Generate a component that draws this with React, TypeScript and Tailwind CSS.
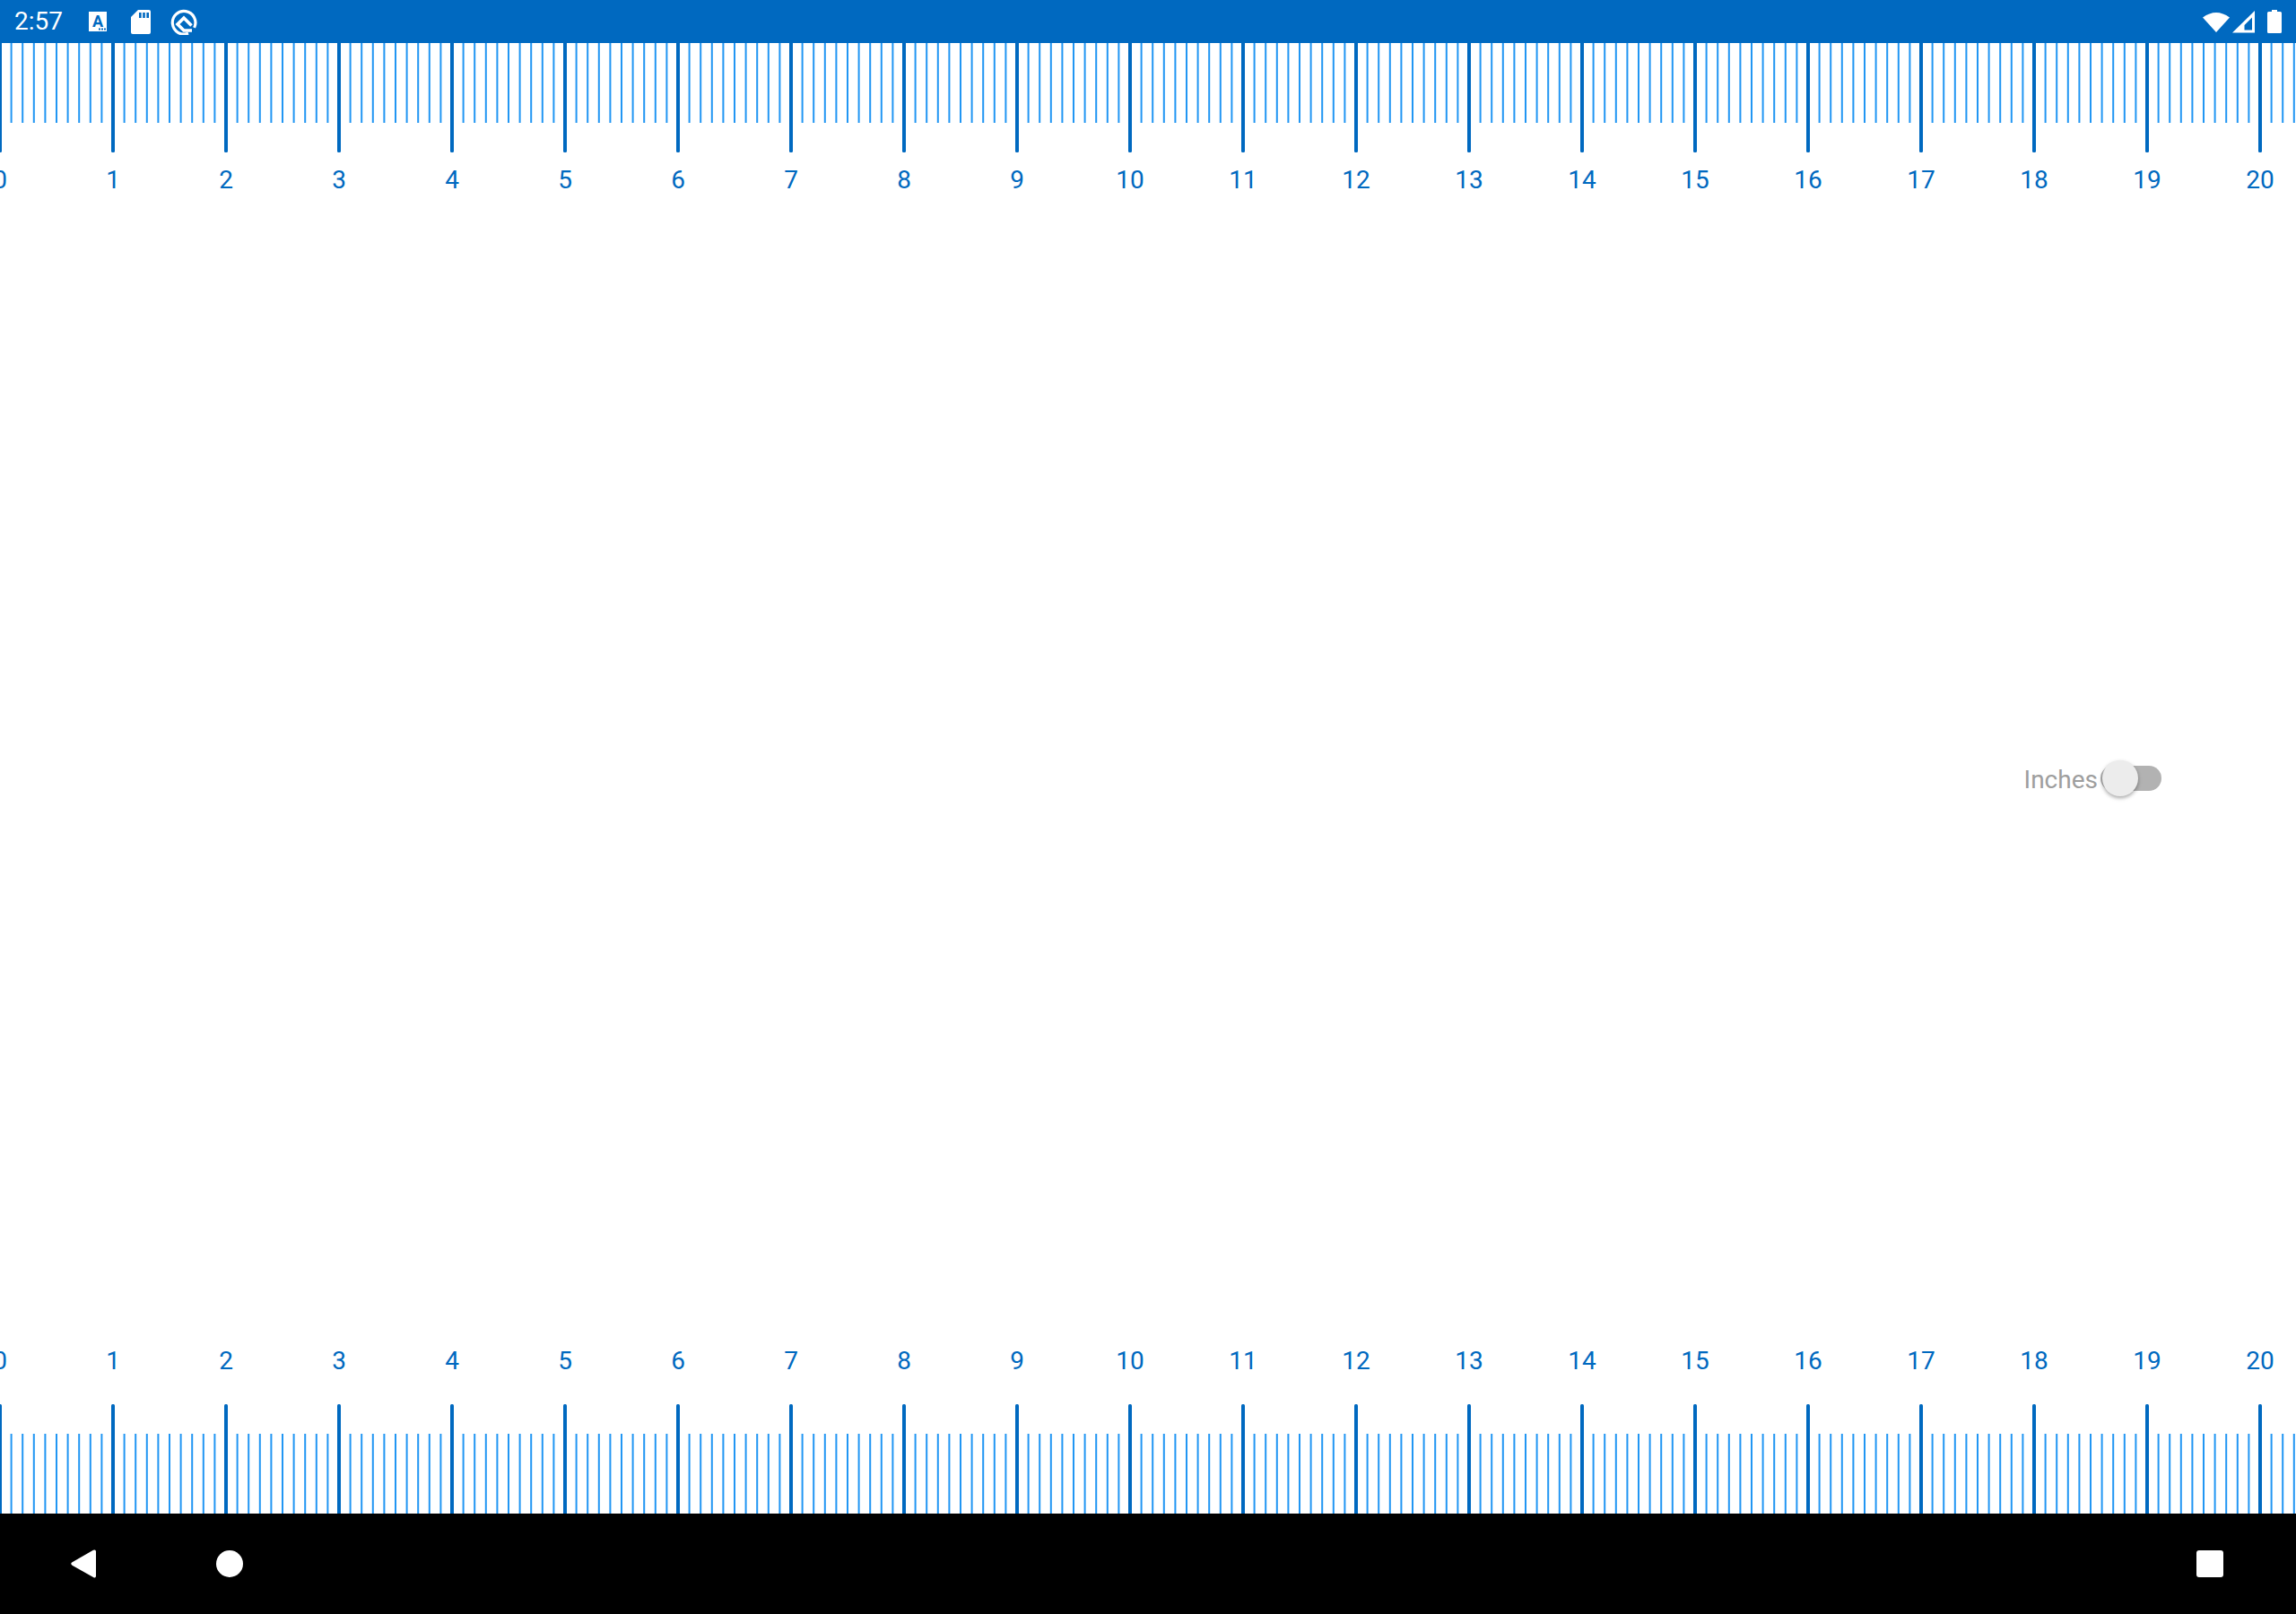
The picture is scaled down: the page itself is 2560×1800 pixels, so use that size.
const MAJOR = "#0069c0";
const MINOR = "#2196f3";
const inches = Array.from({ length: 21 }, (_, i) => i);
const ticks = Array.from({ length: 204 }, (_, i) => i);

function Ticks({ flip }: { flip?: boolean }) {
  return (
    <svg width="2560" height="122" viewBox="0 0 2560 122" className="block shrink-0">
      <g transform={flip ? "translate(0 122) scale(1 -1)" : undefined}>
        {ticks.map((i) =>
          i % 10 === 0 ? (
            <rect key={i} x={i * 12.6 - 2} y={-4} width={4} height={126} rx={1.5} fill={MAJOR} />
          ) : (
            <rect key={i} x={i * 12.6 - 1} y={0} width={2} height={89} fill={MINOR} />
          ),
        )}
      </g>
    </svg>
  );
}

function Labels() {
  return (
    <div className="flex ml-[-63px] h-8 text-[28px] leading-8 text-[#0069c0]">
      {inches.map((i) => (
        <div key={i} className="w-[126px] shrink-0 text-center">
          {i}
        </div>
      ))}
    </div>
  );
}

export default function App() {
  return (
    <div
      className="w-[2560px] h-[1800px] flex flex-col overflow-hidden bg-white"
      style={{ fontFamily: "Roboto, sans-serif" }}
    >
      <header className="h-12 shrink-0 bg-[#0069c0] flex items-center justify-between text-white">
        <div className="flex items-center">
          <span className="ml-4 w-[83px] text-[28px] leading-8">2:57</span>
          <svg width="20" height="22" viewBox="0 0 20 22" className="block">
            <path d="M0 0H20V22H0Z" fill="#fff" />
            <text x="10" y="17" textAnchor="middle" fontSize="18" fontWeight="700" fill="#0069c0" fontFamily="Roboto, sans-serif">A</text>
            <path d="M11 18.5h2v2h-2ZM14 18.5h2v2h-2ZM17 18.5h2v2h-2Z" fill="#0069c0" />
          </svg>
          <svg width="22" height="27" viewBox="0 0 22 27" className="block ml-[27px]">
            <path d="M8 0H20Q22 0 22 2V25Q22 27 20 27H2Q0 27 0 25V8Z" fill="#fff" />
            <path d="M9 3h2.6v6H9ZM13.2 3h2.6v6h-2.6ZM17.4 3H20v6h-2.6Z" fill="#0069c0" />
          </svg>
          <svg width="32" height="30" viewBox="0 0 32 30" className="block ml-[21px]">
            <path d="M21 28.1A12.8 12.8 0 1 1 27.6 21.9" fill="none" stroke="#fff" strokeWidth="3.2" />
            <path d="M25 25H16L9 18 16 11 24.5 19.5" fill="none" stroke="#fff" strokeWidth="3.6" />
          </svg>
        </div>
        <div className="flex items-center mr-4">
          <svg width="30" height="24" viewBox="0 0 30 24" className="block">
            <path d="M0 7.5Q15 -3.5 30 7.5L15 24Z" fill="#fff" />
          </svg>
          <svg width="25" height="25" viewBox="0 0 25 25" className="block ml-[3px]">
            <path d="M25 0V24.5H0ZM22 7.5 13.5 16V21.5H22Z" fill="#fff" fillRule="evenodd" />
          </svg>
          <svg width="16" height="26" viewBox="0 0 16 26" className="block ml-[14px]">
            <path d="M5 0H11V2H14.5Q16 2 16 3.5V24.5Q16 26 14.5 26H1.5Q0 26 0 24.5V3.5Q0 2 1.5 2H5Z" fill="#fff" />
          </svg>
        </div>
      </header>

      <Ticks />
      <div className="mt-[15px]">
        <Labels />
      </div>

      <main className="flex-1 flex items-center justify-end pt-[18px] pr-[150px]">
        <div className="flex items-center">
          <span className="pt-[4px] text-[28px] leading-8 text-[#9e9e9e]">Inches</span>
          <div className="relative ml-[3px] w-[68px] h-7 rounded-full bg-[#b2b2b2]">
            <div className="absolute left-[2px] top-[-6px] w-10 h-10 rounded-full bg-[#ececec] shadow-[0_2px_4px_rgba(0,0,0,0.35)]" />
          </div>
        </div>
      </main>

      <div className="mt-[1px]">
        <Labels />
      </div>
      <div className="mt-[32px]">
        <Ticks flip />
      </div>

      <footer className="h-28 shrink-0 bg-black flex items-center justify-between">
        <div className="flex items-center">
          <svg width="29" height="32" viewBox="0 0 29 32" className="block ml-[79px]">
            <path d="M1.5 14.3 25 .8Q28 -.5 28 2.5V29.5Q28 32.5 25 31L1.5 17.7Q-1 16 1.5 14.3Z" fill="#fff" />
          </svg>
          <div className="ml-[133px] w-[30px] h-[30px] rounded-full bg-white" />
        </div>
        <div className="mr-[81px] w-[30px] h-[30px] rounded-[3px] bg-white" />
      </footer>
    </div>
  );
}
